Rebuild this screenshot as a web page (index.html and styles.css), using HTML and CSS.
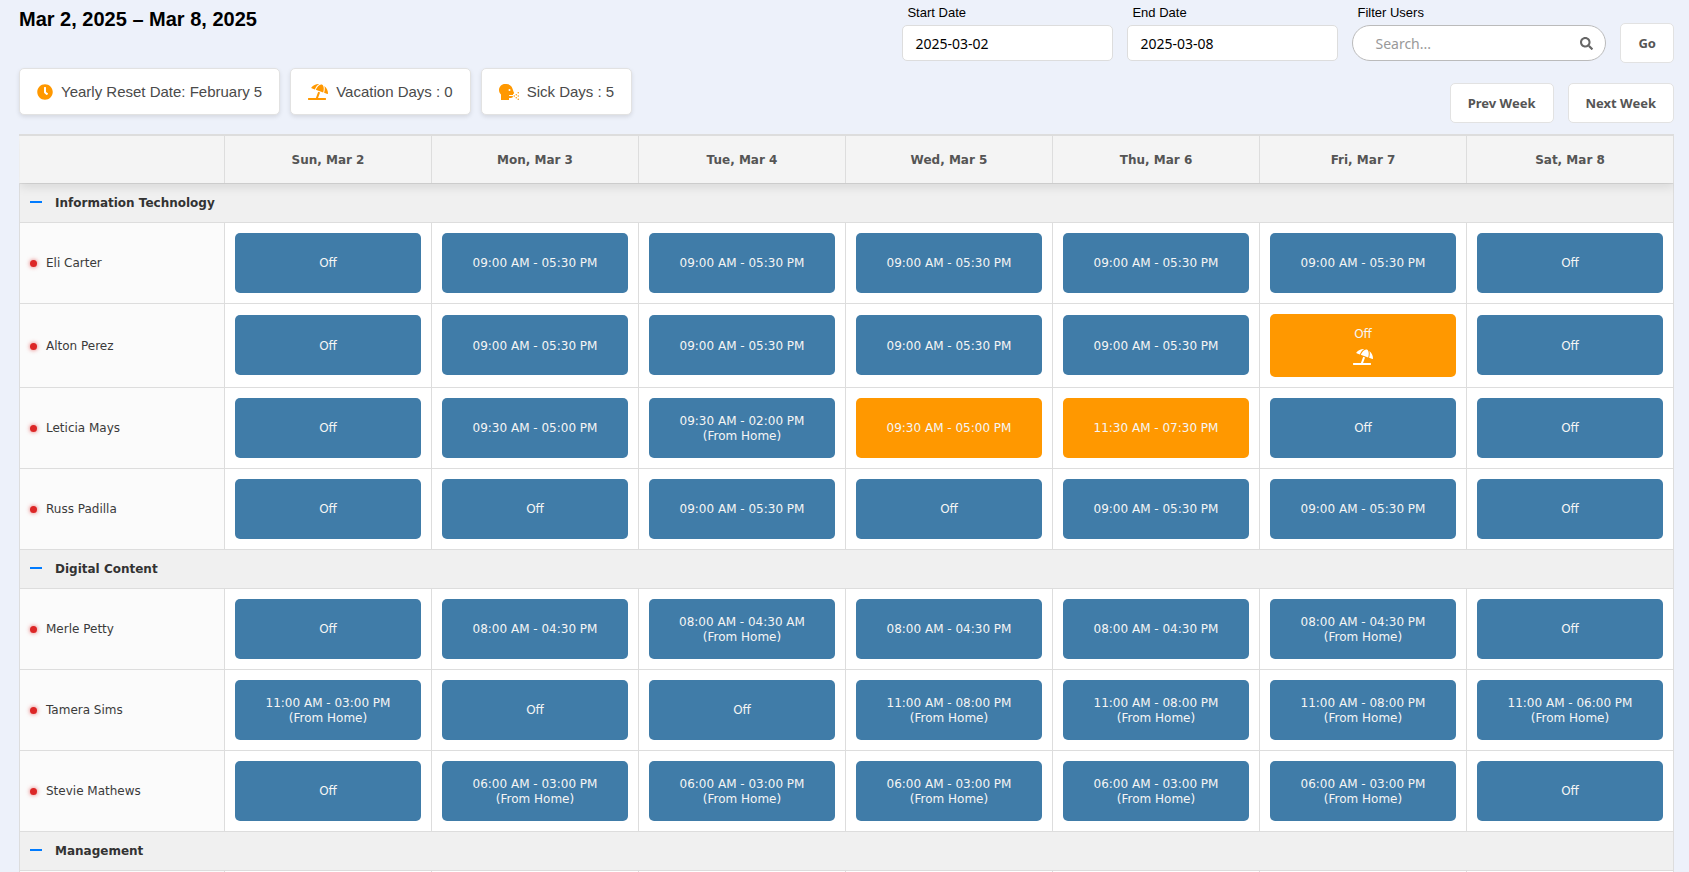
FILE: index.html
```html
<!DOCTYPE html>
<html lang="en">
<head>
<meta charset="utf-8">
<title>Schedule</title>
<link rel="stylesheet" href="styles.css">
</head>
<body>

<!-- shared icons -->
<svg class="sprite" aria-hidden="true">
  <symbol id="umbrella" viewBox="0 0 640 512"><path d="M115.38 136.9l102.11 37.18c35.19-81.54 86.21-144.29 139-173.7-95.88-4.89-188.78 36.96-248.53 111.8-6.69 8.4-2.66 21.05 7.42 24.72zm132.25 48.16l238.48 86.83c35.76-121.38 18.7-231.66-42.63-253.98-7.4-2.7-15.13-4-23.09-4-58.02.01-128.27 69.17-172.76 171.15zM521.48 60.5c6.22 16.3 10.83 34.6 13.2 55.19 5.74 49.89-1.42 108.23-18.95 166.98l102.62 37.36c10.09 3.67 21.31-3.43 21.57-14.17 2.32-95.69-41.91-187.44-118.44-245.36zM560 447.98H321.06L386 269.5l-60.14-21.9-72.9 200.37H16c-8.84 0-16 7.16-16 16.01v32.01C0 504.83 7.16 512 16 512h544c8.84 0 16-7.17 16-16.01v-32.01c0-8.84-7.16-16-16-16z"/></symbol>
  <symbol id="clock" viewBox="0 0 512 512"><path d="M256 8C119 8 8 119 8 256s111 248 248 248 248-111 248-248S393 8 256 8zm92.490 313l-20 25a16 16 0 0 1-22.490 2.500l-67-49.720a40 40 0 0 1-15-31.230V112a16 16 0 0 1 16-16h32a16 16 0 0 1 16 16v144l58 42.500a16 16 0 0 1 2.490 22.500z"/></symbol>
  <symbol id="cough" viewBox="0 0 640 512"><path d="M616 304a24 24 0 1 0-24-24 24 24 0 0 0 24 24zM552 416a24 24 0 1 0 24 24 24 24 0 0 0-24-24zm-64-56a24 24 0 1 0 24 24 24 24 0 0 0-24-24zm128 104a24 24 0 1 0 24 24 24 24 0 0 0-24-24zm0-104a24 24 0 1 0 24 24 24 24 0 0 0-24-24zm-64-40a24 24 0 1 0 24 24 24 24 0 0 0-24-24zm-74.780-45c-21-47.120-48.500-151.750-73.120-186.750A208.130 208.130 0 0 0 234.100 0H192C86 0 0 86 0 192c0 56.750 24.750 107.620 64 142.880V512h256v-64h64a64 64 0 0 0 64-64H336a16 16 0 0 1 0-32h112v-32a32 32 0 0 0 29.220-45zM336 224a32 32 0 1 1 32-32 32 32 0 0 1-32 32z"/></symbol>
</svg>

<div class="top">
  <div class="top-left">
    <h1 class="title">Mar 2, 2025 – Mar 8, 2025</h1>
    <div class="cards">
      <div class="card"><svg class="icon icon-clock"><use href="#clock"/></svg>Yearly Reset Date: February 5</div>
      <div class="card"><svg class="icon"><use href="#umbrella"/></svg>Vacation Days : 0</div>
      <div class="card"><svg class="icon"><use href="#cough"/></svg>Sick Days : 5</div>
    </div>
  </div>
  <div class="top-right">
    <form class="filters">
      <div class="field">
        <label for="start">Start Date</label>
        <input class="date" type="text" id="start" value="2025-03-02">
      </div>
      <div class="field">
        <label for="end">End Date</label>
        <input class="date" type="text" id="end" value="2025-03-08">
      </div>
      <div class="field">
        <label for="search">Filter Users</label>
        <div class="search">
          <input type="text" id="search" placeholder="Search...">
          <svg class="icon-search" viewBox="0 0 512 512"><path d="M505 442.700L405.300 343c-4.500-4.500-10.600-7-17-7H372c27.600-35.300 44-79.700 44-128C416 93.100 322.900 0 208 0S0 93.100 0 208s93.100 208 208 208c48.300 0 92.700-16.400 128-44v16.300c0 6.400 2.500 12.500 7 17l99.700 99.700c9.400 9.400 24.600 9.400 33.900 0l28.300-28.300c9.400-9.400 9.400-24.600.1-34zM208 336c-70.700 0-128-57.200-128-128 0-70.700 57.200-128 128-128 70.700 0 128 57.200 128 128 0 70.700-57.200 128-128 128z"/></svg>
        </div>
      </div>
      <button class="btn" type="button">Go</button>
    </form>
    <div class="weeks">
      <button class="btn" type="button">Prev Week</button>
      <button class="btn" type="button">Next Week</button>
    </div>
  </div>
</div>

<table class="schedule">
<thead>
<tr>
  <th class="name-col"></th>
  <th>Sun, Mar 2</th>
  <th>Mon, Mar 3</th>
  <th>Tue, Mar 4</th>
  <th>Wed, Mar 5</th>
  <th>Thu, Mar 6</th>
  <th>Fri, Mar 7</th>
  <th>Sat, Mar 8</th>
</tr>
</thead>
<tbody>
<tr class="group"><td colspan="8"><button class="toggle" type="button" aria-label="Collapse"></button>Information Technology</td></tr>
<tr>
  <td class="user"><span class="dot"></span>Eli Carter</td>
  <td><div class="shift">Off</div></td>
  <td><div class="shift">09:00 AM - 05:30 PM</div></td>
  <td><div class="shift">09:00 AM - 05:30 PM</div></td>
  <td><div class="shift">09:00 AM - 05:30 PM</div></td>
  <td><div class="shift">09:00 AM - 05:30 PM</div></td>
  <td><div class="shift">09:00 AM - 05:30 PM</div></td>
  <td><div class="shift">Off</div></td>
</tr>
<tr>
  <td class="user"><span class="dot"></span>Alton Perez</td>
  <td><div class="shift">Off</div></td>
  <td><div class="shift">09:00 AM - 05:30 PM</div></td>
  <td><div class="shift">09:00 AM - 05:30 PM</div></td>
  <td><div class="shift">09:00 AM - 05:30 PM</div></td>
  <td><div class="shift">09:00 AM - 05:30 PM</div></td>
  <td><div class="shift orange">Off<svg class="icon icon-off"><use href="#umbrella"/></svg></div></td>
  <td><div class="shift">Off</div></td>
</tr>
<tr>
  <td class="user"><span class="dot"></span>Leticia Mays</td>
  <td><div class="shift">Off</div></td>
  <td><div class="shift">09:30 AM - 05:00 PM</div></td>
  <td><div class="shift">09:30 AM - 02:00 PM<br>(From Home)</div></td>
  <td><div class="shift orange">09:30 AM - 05:00 PM</div></td>
  <td><div class="shift orange">11:30 AM - 07:30 PM</div></td>
  <td><div class="shift">Off</div></td>
  <td><div class="shift">Off</div></td>
</tr>
<tr>
  <td class="user"><span class="dot"></span>Russ Padilla</td>
  <td><div class="shift">Off</div></td>
  <td><div class="shift">Off</div></td>
  <td><div class="shift">09:00 AM - 05:30 PM</div></td>
  <td><div class="shift">Off</div></td>
  <td><div class="shift">09:00 AM - 05:30 PM</div></td>
  <td><div class="shift">09:00 AM - 05:30 PM</div></td>
  <td><div class="shift">Off</div></td>
</tr>
<tr class="group"><td colspan="8"><button class="toggle" type="button" aria-label="Collapse"></button>Digital Content</td></tr>
<tr>
  <td class="user"><span class="dot"></span>Merle Petty</td>
  <td><div class="shift">Off</div></td>
  <td><div class="shift">08:00 AM - 04:30 PM</div></td>
  <td><div class="shift">08:00 AM - 04:30 AM<br>(From Home)</div></td>
  <td><div class="shift">08:00 AM - 04:30 PM</div></td>
  <td><div class="shift">08:00 AM - 04:30 PM</div></td>
  <td><div class="shift">08:00 AM - 04:30 PM<br>(From Home)</div></td>
  <td><div class="shift">Off</div></td>
</tr>
<tr>
  <td class="user"><span class="dot"></span>Tamera Sims</td>
  <td><div class="shift">11:00 AM - 03:00 PM<br>(From Home)</div></td>
  <td><div class="shift">Off</div></td>
  <td><div class="shift">Off</div></td>
  <td><div class="shift">11:00 AM - 08:00 PM<br>(From Home)</div></td>
  <td><div class="shift">11:00 AM - 08:00 PM<br>(From Home)</div></td>
  <td><div class="shift">11:00 AM - 08:00 PM<br>(From Home)</div></td>
  <td><div class="shift">11:00 AM - 06:00 PM<br>(From Home)</div></td>
</tr>
<tr>
  <td class="user"><span class="dot"></span>Stevie Mathews</td>
  <td><div class="shift">Off</div></td>
  <td><div class="shift">06:00 AM - 03:00 PM<br>(From Home)</div></td>
  <td><div class="shift">06:00 AM - 03:00 PM<br>(From Home)</div></td>
  <td><div class="shift">06:00 AM - 03:00 PM<br>(From Home)</div></td>
  <td><div class="shift">06:00 AM - 03:00 PM<br>(From Home)</div></td>
  <td><div class="shift">06:00 AM - 03:00 PM<br>(From Home)</div></td>
  <td><div class="shift">Off</div></td>
</tr>
<tr class="group"><td colspan="8"><button class="toggle" type="button" aria-label="Collapse"></button>Management</td></tr>
<tr class="blank">
  <td class="user"></td>
  <td></td>
  <td></td>
  <td></td>
  <td></td>
  <td></td>
  <td></td>
  <td></td>
</tr>
</tbody>
</table>

</body>
</html>
```

FILE: styles.css
```css
* {
  box-sizing: border-box;
}
html {
  overflow: hidden;
}
body {
  margin: 0;
  padding: 0 15px 0 19px;
  background-color: #edf1fa;
  font-family: "Liberation Sans", Arial, sans-serif;
}
.sprite {
  display: none;
}

/* top bar */
.top {
  display: flex;
  justify-content: space-between;
  margin-bottom: 11px;
}
.title {
  margin: 8px 0 37px;
  font-size: 20px;
  line-height: 23px;
}
.cards {
  display: flex;
  gap: 10px;
}
.card {
  display: flex;
  align-items: center;
  gap: 8px;
  height: 47px;
  padding: 0 17px;
  background: #fff;
  border: 1px solid #e2e2e2;
  border-radius: 5px;
  box-shadow: 0 2px 4px rgba(0, 0, 0, 0.1);
  color: #4a4a4a;
  font-size: 15px;
}
.icon {
  width: 20px;
  height: 16px;
  fill: #ff9800;
}
.icon-clock {
  width: 16px;
}
.filters {
  display: flex;
  align-items: flex-end;
  gap: 14px;
}
.field label {
  display: block;
  margin: 5px 0 5px 5px;
  font-size: 13px;
  line-height: 15px;
}
.field input {
  display: block;
  width: 211px;
  height: 36px;
  padding: 0 12px;
  border: 1px solid #ddd;
  border-radius: 5px;
  background: #fff;
  color: #000;
  font-family: "Noto Sans", sans-serif;
  font-size: 14px;
}
.search {
  position: relative;
}
.field .search input {
  width: 254px;
  padding: 0 40px 0 22px;
  border-color: #bbb;
  border-radius: 18px;
}
.search input::placeholder {
  color: #999;
}
.icon-search {
  position: absolute;
  right: 13px;
  top: 12px;
  width: 13px;
  height: 13px;
  fill: #666;
}
.btn {
  height: 40px;
  padding: 0 17px;
  background: #fff;
  border: 1px solid #e2e2e2;
  border-radius: 5px;
  color: #555;
  font-family: "Noto Sans", sans-serif;
  font-size: 13px;
  font-weight: bold;
  cursor: pointer;
}
.filters .btn {
  margin-bottom: -2px;
}
.weeks {
  display: flex;
  justify-content: flex-end;
  gap: 14px;
  margin-top: 22px;
}

/* schedule */
.schedule {
  width: 100%;
  table-layout: fixed;
  border-collapse: collapse;
  background: #fff;
  font-family: "DejaVu Sans", sans-serif;
  font-size: 12px;
  line-height: 15px;
}
.schedule thead {
  position: relative;
  box-shadow: 0 4px 10px rgba(0, 0, 0, 0.1);
  clip-path: inset(0 0 -20px 0);
}
.schedule th {
  height: 48px;
  padding: 2px 0 0;
  background: #f4f4f4;
  border: 1px solid #ddd;
  border-top: 2px solid #ddd;
  color: #555;
}
.schedule .name-col {
  width: 205px;
  border-left-color: #f4f4f4;
}
.schedule td {
  padding: 10px;
  border: 1px solid #ddd;
}
.schedule .group td {
  height: 39px;
  padding: 2px 10px 0;
  background: #f0f0f0;
  color: #333;
  font-weight: bold;
}
.toggle {
  width: 12px;
  height: 2px;
  margin: 0 13px 4px 0;
  padding: 0;
  border: none;
  background: #007bff;
  vertical-align: middle;
  cursor: pointer;
}
.schedule .user {
  padding: 12px 10px 10px;
  background: #fbfbfb;
  color: #3a3a3a;
}
.dot {
  display: inline-block;
  width: 7px;
  height: 7px;
  margin-right: 9px;
  border-radius: 50%;
  background: #dc2626;
  box-shadow: 0 0 4px rgba(220, 38, 38, 0.7);
}
.shift {
  display: flex;
  flex-direction: column;
  align-items: center;
  justify-content: center;
  min-height: 60px;
  padding: 13px 4px 11px;
  background: #407ca8;
  border-radius: 5px;
  color: #f5f5f5;
  text-align: center;
}
.shift.orange {
  background: #ff9800;
}
.icon-off {
  margin-top: 7px;
  margin-bottom: 1px;
  fill: #fff;
}
.blank td {
  height: 81px;
}
```
